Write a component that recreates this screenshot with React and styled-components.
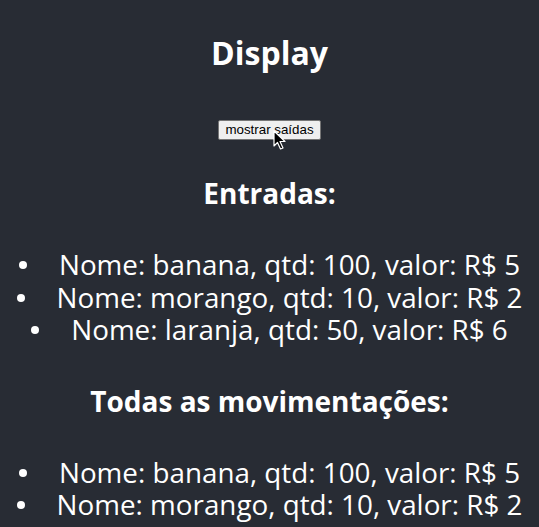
import React from 'react';
import styled, { createGlobalStyle } from 'styled-components';

const Global = createGlobalStyle`
  html, body {
    margin: 0;
    padding: 0;
    background-color: #282c34;
  }
`;

const Page = styled.div`
  min-height: 100vh;
  background-color: #282c34;
  color: #ffffff;
  text-align: center;
  font-family: "Open Sans", "Noto Sans", sans-serif;
  padding-top: 33px;
`;

const Title = styled.h1`
  margin: 0;
  font-size: 32px;
  line-height: 40px;
  font-weight: 700;
`;

const ButtonWrap = styled.div`
  position: relative;
  display: inline-block;
  margin-top: 44px;
`;

const Botao = styled.button`
  font-family: "Liberation Sans", Arial, sans-serif;
  font-size: 13.33px;
  line-height: 16px;
  padding: 1px 6px;
  color: #000;
  background-color: #efefef;
  border: 1px solid #767676;
  border-radius: 2px;
`;

const Cursor = styled.svg`
  position: absolute;
  left: 55px;
  top: 13px;
  width: 14px;
  height: 20px;
`;

const Subtitulo = styled.h3`
  margin: ${p => p.top}px 0 0;
  font-size: 28px;
  line-height: 34px;
  font-weight: 700;
`;

const Lista = styled.ul`
  margin: 38px 0 0;
  padding-left: 40px;
  list-style: none;
  font-size: 27.8px;
  line-height: 32.5px;
`;

const Item = styled.li``;

const Texto = styled.span`
  position: relative;
  &::before {
    content: "";
    position: absolute;
    left: -40px;
    top: 16px;
    width: 8px;
    height: 8px;
    border-radius: 50%;
    background-color: #ffffff;
  }
`;

const entradas = [
  { nome: 'banana', qtd: 100, valor: 5 },
  { nome: 'morango', qtd: 10, valor: 2 },
  { nome: 'laranja', qtd: 50, valor: 6 },
];

const todas = [
  { nome: 'banana', qtd: 100, valor: 5 },
  { nome: 'morango', qtd: 10, valor: 2 },
  { nome: 'laranja', qtd: 50, valor: 6 },
];

const App = () => {
  return (
    <Page>
      <Global />
      <Title>Display</Title>
      <ButtonWrap>
        <Botao>mostrar saídas</Botao>
        <Cursor viewBox="0 0 14 20">
          <path d="M1 1 L1 16 L4.5 12.5 L7.5 19 L10 18 L7 11.5 L12 11.5 Z" fill="#000" stroke="#fff" strokeWidth="1.2" strokeLinejoin="round" />
        </Cursor>
      </ButtonWrap>
      <Subtitulo top={36}>Entradas:</Subtitulo>
      <Lista>
        {entradas.map((item, index) => (
          <Item key={index}><Texto>Nome: {item.nome}, qtd: {item.qtd}, valor: R$ {item.valor}</Texto></Item>
        ))}
      </Lista>
      <Subtitulo top={38}>Todas as movimentações:</Subtitulo>
      <Lista>
        {todas.map((item, index) => (
          <Item key={index}><Texto>Nome: {item.nome}, qtd: {item.qtd}, valor: R$ {item.valor}</Texto></Item>
        ))}
      </Lista>
    </Page>
  );
};

export default App;
